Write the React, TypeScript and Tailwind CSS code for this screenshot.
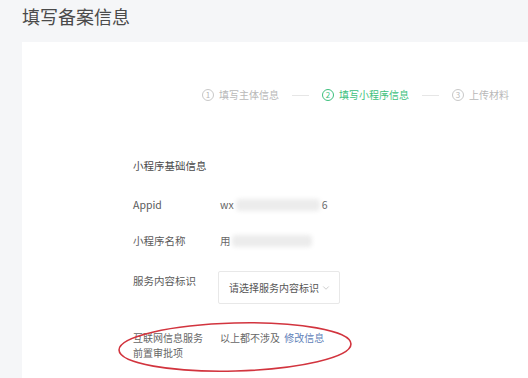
import React from 'react';
import { ChevronDown } from 'lucide-react';

const steps = [
  { n: '1', label: '填写主体信息', active: false },
  { n: '2', label: '填写小程序信息', active: true },
  { n: '3', label: '上传材料', active: false },
];

const Blur = ({ w }: { w: number }) => (
  <span className="inline-block h-[12px] bg-[#ececec] blur-[2px] rounded-sm" style={{ width: w }}></span>
);

const App = () => {
  return (
    <div
      className="relative w-[528px] h-[378px] overflow-hidden bg-[#f5f6f8] text-[#5a5a5a]"
      style={{ fontFamily: '"Noto Sans CJK SC", "Noto Sans", sans-serif' }}
    >
      <h1 className="h-[42px] pl-[22px] pt-[3px] text-[18px] leading-[26px] text-[#4a4a4a]">
        填写备案信息
      </h1>

      <div className="ml-[22px] h-[336px] bg-white pt-[47px]">
        {/* steps */}
        <div className="flex items-center pl-[180px] h-[12px] text-[10px] text-[#b8b8b8]">
          {steps.map((s, i) => (
            <React.Fragment key={s.n}>
              {i > 0 && <span className="w-[17px] h-px bg-[#e6e6e6] mx-[13px]"></span>}
              <span className={`flex items-center gap-[5px] ${s.active ? 'text-[#3cbf7c]' : ''}`}>
                <span
                  className={`w-[12px] h-[12px] rounded-full border flex items-center justify-center text-[8px] leading-none ${
                    s.active ? 'border-[#3cbf7c]' : 'border-[#c8c8c8]'
                  }`}
                >
                  {s.n}
                </span>
                <span className="leading-[12px]">{s.label}</span>
              </span>
            </React.Fragment>
          ))}
        </div>

        <div className="pl-[111px] text-[10.5px] leading-[16px]">
          <div className="mt-[57px] text-[#4a4a4a]">小程序基础信息</div>

          <div className="mt-[23px] grid grid-cols-[87px_1fr] items-center">
            <span>Appid</span>
            <span className="flex items-center gap-[2px] text-[#666]">
              wx <Blur w={84} /> <span>6</span>
            </span>
          </div>

          <div className="mt-[20px] grid grid-cols-[87px_1fr] items-center">
            <span>小程序名称</span>
            <span className="flex items-center gap-[1px] text-[#666]">
              用 <Blur w={80} />
            </span>
          </div>

          <div className="mt-[22px] grid grid-cols-[85px_1fr] items-start">
            <span className="pt-[2px]">服务内容标识</span>
            <div className="w-[122px] h-[33px] border border-[#e8e8e8] rounded-[2px] flex items-center justify-between pl-[10px] pr-[8px] text-[10px] whitespace-nowrap text-[#555]">
              <span>请选择服务内容标识</span>
              <ChevronDown size={10} className="text-[#c4c4c4]" />
            </div>
          </div>

          <div className="mt-[26px] grid grid-cols-[87px_1fr] items-start text-[10px] leading-[15px]">
            <span className="text-[#666]">
              互联网信息服务
              <br />
              前置审批项
            </span>
            <span className="text-[#666]">
              以上都不涉及 <span className="ml-[2px] text-[#5f82b9]">修改信息</span>
            </span>
          </div>
        </div>
      </div>

      {/* annotation */}
      <svg className="absolute left-[114px] top-[318px]" width="244" height="58" viewBox="0 0 244 58">
        <ellipse
          cx="121"
          cy="29"
          rx="116"
          ry="24"
          fill="none"
          stroke="#d2343e"
          strokeWidth="1.6"
          transform="rotate(-1.5 121 29)"
        />
      </svg>
    </div>
  );
};

export default App;
